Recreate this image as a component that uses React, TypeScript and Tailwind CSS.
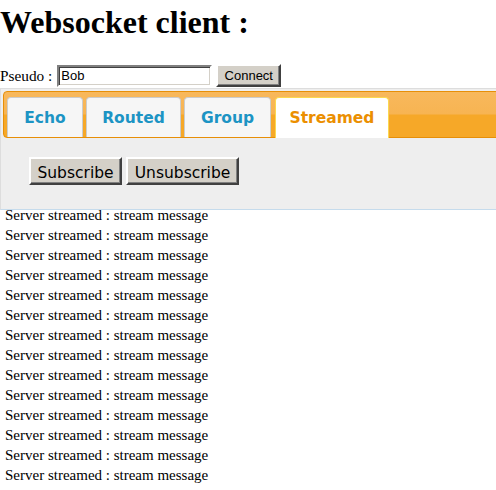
import { useState } from 'react';

const TABS = [
  { name: 'Echo', w: 'w-[76px]', ml: 'ml-0' },
  { name: 'Routed', w: 'w-[95px]', ml: 'ml-[3px]' },
  { name: 'Group', w: 'w-[87px]', ml: 'ml-[3px]' },
  { name: 'Streamed', w: 'w-[114px]', ml: 'ml-[4px]' },
];

const messages = Array.from({ length: 15 }, () => 'Server streamed : stream message');

export default function App() {
  const [active, setActive] = useState('Streamed');
  const [pseudo, setPseudo] = useState('Bob');

  return (
    <div className="w-[496px] h-[490px] overflow-hidden bg-white text-black font-['Liberation_Serif',serif]">
      <h1 className="mt-[4px] text-[32px] leading-[37px] font-bold">Websocket client :</h1>

      {/* Pseudo row */}
      <div className="mt-[23px] flex items-center h-[23px]">
        <span className="text-[15.3px] leading-[17px]">Pseudo :</span>
        <input
          value={pseudo}
          onChange={e => setPseudo(e.target.value)}
          className="ml-[5px] w-[155px] h-[22px] px-[2px] bg-white text-[13px] font-['Liberation_Sans',sans-serif] border-2 border-t-[#808080] border-l-[#808080] border-b-white border-r-white shadow-[inset_1px_1px_0_#404040,inset_-1px_-1px_0_#d4d0c8] outline-none"
        />
        <button className="ml-[4px] w-[65px] h-[23px] bg-[#d4d0c8] text-[13px] font-['Liberation_Sans',sans-serif] border-2 border-t-white border-l-white border-r-[#404040] border-b-[#404040] shadow-[inset_-1px_-1px_0_#808080]">
          Connect
        </button>
      </div>

      {/* Tabs widget */}
      <div className="mt-[1px] w-[520px] p-[2px] bg-[#eeeeee] border border-[#dddddd] border-b-[#c5dbec]">
        <div className="flex items-end pt-[5px] pl-[3px] rounded-[4px] border border-[#e78f08] bg-[linear-gradient(to_bottom,#f8b85c_0%,#f7b452_48%,#f6a828_52%,#f6a828_100%)]">
          {TABS.map(t => {
            const on = t.name === active;
            return (
              <button
                key={t.name}
                onClick={() => setActive(t.name)}
                className={
                  on
                    ? `${t.w} ${t.ml} h-[41px] -mb-[1px] pt-[1px] relative flex items-center justify-center rounded-t-[4px] border border-b-0 border-[#fbd850] bg-white text-[#eb8f00] text-[15.5px] font-bold font-['DejaVu_Sans',sans-serif]`
                    : `${t.w} ${t.ml} h-[40px] pt-[2px] flex items-center justify-center rounded-t-[4px] border border-b-0 border-[#cccccc] bg-[#f6f6f6] text-[#1c94c4] text-[15.5px] font-bold font-['DejaVu_Sans',sans-serif]`
                }
              >
                {t.name}
              </button>
            );
          })}
        </div>

        <div className="pt-[19px] pb-[22px] pl-[26px] flex gap-[4px]">
          <button className="w-[93px] h-[28px] pt-[3px] bg-[#d4d0c8] text-[15.5px] font-['DejaVu_Sans',sans-serif] border-2 border-t-white border-l-white border-r-[#404040] border-b-[#404040] shadow-[inset_-1px_-1px_0_#808080]">
            Subscribe
          </button>
          <button className="w-[113px] h-[28px] pt-[3px] bg-[#d4d0c8] text-[15.5px] font-['DejaVu_Sans',sans-serif] border-2 border-t-white border-l-white border-r-[#404040] border-b-[#404040] shadow-[inset_-1px_-1px_0_#808080]">
            Unsubscribe
          </button>
        </div>
      </div>

      {/* Messages */}
      <div className="overflow-hidden pl-[5px]">
        <div className="-mt-[5px] text-[15px] leading-[20px]">
          {messages.map((m, i) => (
            <div key={i}>{m}</div>
          ))}
        </div>
      </div>
    </div>
  );
}
